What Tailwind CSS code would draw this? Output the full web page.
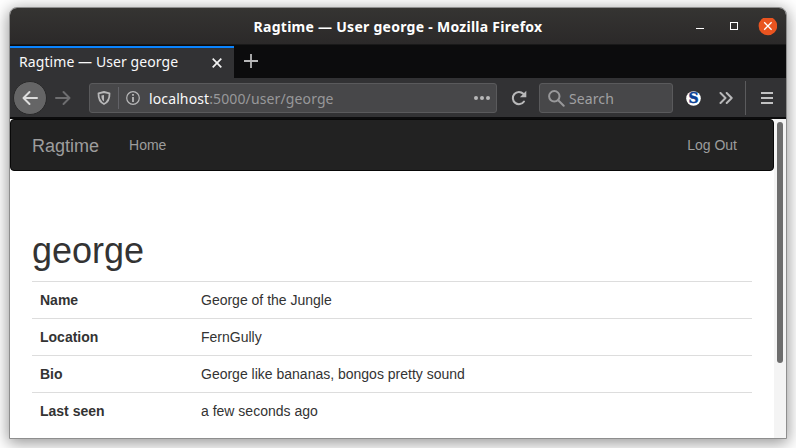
<!DOCTYPE html>
<html lang="en">
<head>
<meta charset="utf-8">
<title>Ragtime — User george</title>
<script src="https://cdn.jsdelivr.net/npm/@tailwindcss/browser@4"></script>
</head>
<body class="w-[796px] h-[448px] overflow-hidden bg-white pt-[7px] pl-[9px]">
<div class="w-[778px] h-[432px] flex flex-col overflow-hidden rounded-t-[8px] border border-[#8e8e8e] bg-white shadow-[0_3px_16px_1px_rgba(0,0,0,0.42)]">
  <!-- title bar -->
  <header class="h-[37px] shrink-0 flex items-center border-b border-[#191919] bg-linear-to-b from-[#353432] to-[#2b2929] font-['Noto_Sans',sans-serif]">
    <div class="w-[110px]"></div>
    <h1 class="grow text-center text-[14px] font-bold text-white whitespace-nowrap tracking-[0.27px]">Ragtime — User george - Mozilla Firefox</h1>
    <div class="w-[110px] h-[36px] flex items-center justify-end pr-[9px] pt-[4px]">
      <svg class="w-[86px] h-[20px]" viewBox="0 0 86 20" fill="none">
        <path d="M5 10.500h8" stroke="#fff"/>
        <rect x="39.500" y="4.500" width="7" height="7" stroke="#fff"/>
        <circle cx="76.900" cy="8" r="9.300" fill="#e95420"/>
        <path d="M73.200 4.300l7.400 7.400M80.600 4.300l-7.400 7.400" stroke="#fff" stroke-width="1.300"/>
      </svg>
    </div>
  </header>
  <!-- tabs -->
  <div class="h-[33px] shrink-0 flex bg-[#0c0c0d] pt-px font-['Noto_Sans',sans-serif]">
    <div class="w-[224px] h-[32px] flex items-center justify-between border-t-2 border-[#0a84ff] bg-[#323234] pl-[9px] pr-[12px]">
      <span class="text-[14px] leading-[20px] pb-[2px] tracking-[0.08px] text-[#f9f9fa] whitespace-nowrap">Ragtime — User george</span>
      <svg class="w-[10px] h-[10px]" viewBox="0 0 10 10"><path d="M.7.700l8.600 8.600M9.300.7L.7 9.300" stroke="#f2f2f2" stroke-width="1.700"/></svg>
    </div>
    <svg class="w-[14px] h-[14px] ml-[10px] mt-[8px]" viewBox="0 0 14 14"><path d="M0 7h14M7 0v14" stroke="#b8b8b9" stroke-width="1.800"/></svg>
  </div>
  <!-- toolbar -->
  <div class="h-[41px] shrink-0 flex items-center border-b-2 border-[#0c0c0d] bg-[#323234] pl-[3px] pt-px font-['Noto_Sans',sans-serif]">
    <div class="w-[34px] h-[34px] rounded-full bg-[#656566] border border-[#29292a] flex items-center justify-center shrink-0">
      <svg class="w-[16px] h-[16px]" viewBox="0 0 16 16" fill="none" stroke="#dcdcdc" stroke-width="2" stroke-linecap="round" stroke-linejoin="round"><path d="M15 8H1.500M7.500 2l-6 6 6 6"/></svg>
    </div>
    <svg class="w-[16px] h-[16px] ml-[8px] shrink-0" viewBox="0 0 16 16" fill="none" stroke="#6e6e70" stroke-width="2" stroke-linecap="round" stroke-linejoin="round"><path d="M1 8h13.500M8.500 2l6 6-6 6"/></svg>
    <div class="w-[408px] h-[30px] ml-[18px] shrink-0 flex items-center rounded-[3px] border border-[#5a5a5c] bg-[#474749]">
      <svg class="w-[14px] h-[14px] ml-[7px]" viewBox="0 0 14 14"><path d="M7 1L12.500 2.300C12.700 7.500 11.500 11 7 13 2.500 11 1.300 7.500 1.500 2.300Z" fill="none" stroke="#b8b8b9" stroke-width="1.800" stroke-linejoin="round"/><path d="M7 4v6.500C5 9.500 4.400 7.500 4.400 4.500Z" fill="#b8b8b9"/></svg>
      <div class="w-px h-[22px] ml-[7px] bg-[#626267]"></div>
      <svg class="w-[14px] h-[14px] ml-[7px]" viewBox="0 0 14 14"><circle cx="7" cy="7" r="6.300" fill="none" stroke="#b8b8b9" stroke-width="1.200"/><path d="M6.100 6h1.800v5H6.100zM6.100 3h1.800v1.800H6.100z" fill="#b8b8b9"/></svg>
      <span class="ml-[9px] grow pt-[2px] text-[14px] leading-[20px] tracking-[0.12px] text-[#98989a] whitespace-nowrap"><span class="text-[#f9f9fa]">localhost</span>:5000/user/george</span>
      <svg class="w-[16px] h-[4px] mr-[6px]" viewBox="0 0 16 4" fill="#b8b8b9"><circle cx="2" cy="2" r="2"/><circle cx="8" cy="2" r="2"/><circle cx="14" cy="2" r="2"/></svg>
    </div>
    <svg class="w-[16px] h-[16px] ml-[14px] shrink-0" viewBox="0 0 16 16"><path d="M13 11.500A6.100 6.100 0 1 1 12.300 3.800" fill="none" stroke="#b8b8b9" stroke-width="2" stroke-linecap="round"/><path d="M15.300.8v6.400H8.900Z" fill="#b8b8b9"/></svg>
    <div class="w-[134px] h-[30px] ml-[12px] shrink-0 flex items-center rounded-[3px] border border-[#5a5a5c] bg-[#474749]">
      <svg class="w-[17px] h-[17px] ml-[8px]" viewBox="0 0 17 17" fill="none" stroke="#98989a" stroke-width="2" stroke-linecap="round"><circle cx="6.300" cy="6.300" r="5.200"/><path d="M10.200 10.200l5.500 5.500"/></svg>
      <span class="ml-[4px] pt-[2px] text-[14px] leading-[20px] tracking-[0.1px] text-[#a0a0a2]">Search</span>
    </div>
    <svg class="w-[15px] h-[15px] ml-[13px] shrink-0" viewBox="0 0 15 15"><circle cx="7.500" cy="7.500" r="7.300" fill="#fff"/><text x="7.500" y="12.300" text-anchor="middle" font-family="DejaVu Serif, serif" font-size="14" font-weight="700" fill="#0a3f94" stroke="#0a3f94" stroke-width=".5">S</text></svg>
    <svg class="w-[14px] h-[12px] ml-[18px] shrink-0" viewBox="0 0 14 12" fill="none" stroke="#b8b8b9" stroke-width="2" stroke-linecap="round" stroke-linejoin="round"><path d="M1.500 1l5 5-5 5M7.700 1l5 5-5 5"/></svg>
    <div class="w-px h-[34px] ml-[12px] bg-[#5b5b5d] shrink-0"></div>
    <svg class="w-[12px] h-[12px] ml-[15px] shrink-0" viewBox="0 0 12 12"><path d="M0 1h12M0 6h12M0 11h12" stroke="#c2c2c3" stroke-width="2"/></svg>
  </div>
  <!-- page -->
  <div class="grow min-h-0 flex font-['Liberation_Sans',Arial,sans-serif] text-[14px] leading-[20px] text-[#333]">
    <main class="w-[764px]">
      <nav class="h-[52px] flex items-center rounded-[4px] border border-[#080808] bg-[#222] pl-[21px] pr-[36px] text-[#9d9d9d]">
        <a class="text-[18px] pt-[2px]">Ragtime</a>
        <a class="ml-[30px]">Home</a>
        <a class="ml-auto">Log Out</a>
      </nav>
      <section class="px-[22px] pt-[60px]">
        <h2 class="text-[36px] leading-[40px] pb-[10px]">george</h2>
        <dl class="grid grid-cols-[161px_1fr]">
          <dt class="border-t border-[#ddd] p-2 font-bold">Name</dt><dd class="border-t border-[#ddd] p-2">George of the Jungle</dd>
          <dt class="border-t border-[#ddd] p-2 font-bold">Location</dt><dd class="border-t border-[#ddd] p-2">FernGully</dd>
          <dt class="border-t border-[#ddd] p-2 font-bold">Bio</dt><dd class="border-t border-[#ddd] p-2">George like bananas, bongos pretty sound</dd>
          <dt class="border-t border-[#ddd] p-2 font-bold">Last seen</dt><dd class="border-t border-[#ddd] p-2">a few seconds ago</dd>
        </dl>
      </section>
    </main>
    <div class="w-[12px] bg-[#f4f4f4] pt-[3px] pl-[3px]"><div class="w-[6px] h-[241px] rounded-full bg-[#6d6d6d]"></div></div>
  </div>
</div>
</body>
</html>
